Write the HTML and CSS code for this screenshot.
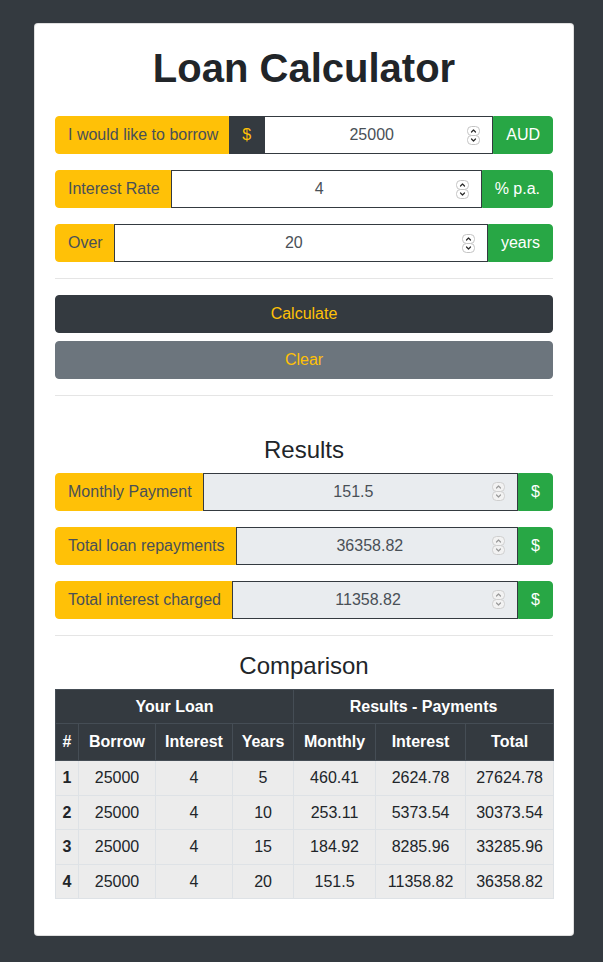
FILE: index.html
```html
<!DOCTYPE html>
<html lang="en">
<head>
<meta charset="utf-8">
<title>Loan Calculator</title>
<link rel="stylesheet" href="styles.css">
</head>
<body>
<main class="card">
  <h1 class="title">Loan Calculator</h1>
  <form class="form">
    <div class="group">
      <span class="addon addon-label">I would like to borrow</span>
      <span class="addon addon-dark">$</span>
      <label class="field">
        <input class="field-input" type="text" value="25000">
        <svg class="spin" viewBox="0 0 13 19" width="13" height="19"><rect x="0.5" y="0.5" width="12" height="9" rx="4" /><rect x="0.5" y="9.5" width="12" height="9" rx="4" /><path d="M4.5 6 L6.5 4 L8.5 6 M4.5 13 L6.5 15 L8.5 13" /></svg>
      </label>
      <span class="addon addon-green">AUD</span>
    </div>
    <div class="group">
      <span class="addon addon-label">Interest Rate</span>
      <label class="field">
        <input class="field-input" type="text" value="4">
        <svg class="spin" viewBox="0 0 13 19" width="13" height="19"><rect x="0.5" y="0.5" width="12" height="9" rx="4" /><rect x="0.5" y="9.5" width="12" height="9" rx="4" /><path d="M4.5 6 L6.5 4 L8.5 6 M4.5 13 L6.5 15 L8.5 13" /></svg>
      </label>
      <span class="addon addon-green">% p.a.</span>
    </div>
    <div class="group">
      <span class="addon addon-label">Over</span>
      <label class="field">
        <input class="field-input" type="text" value="20">
        <svg class="spin" viewBox="0 0 13 19" width="13" height="19"><rect x="0.5" y="0.5" width="12" height="9" rx="4" /><rect x="0.5" y="9.5" width="12" height="9" rx="4" /><path d="M4.5 6 L6.5 4 L8.5 6 M4.5 13 L6.5 15 L8.5 13" /></svg>
      </label>
      <span class="addon addon-green">years</span>
    </div>
    <hr class="rule">
    <button type="button" class="btn btn-dark">Calculate</button>
    <button type="button" class="btn btn-gray">Clear</button>
    <hr class="rule">
  </form>

  <h3 class="heading heading-results">Results</h3>
  <div class="group">
    <span class="addon addon-label">Monthly Payment</span>
    <label class="field field-ro">
      <input class="field-input" type="text" value="151.5" readonly>
      <svg class="spin" viewBox="0 0 13 19" width="13" height="19"><rect x="0.5" y="0.5" width="12" height="9" rx="4" /><rect x="0.5" y="9.5" width="12" height="9" rx="4" /><path d="M4.5 6 L6.5 4 L8.5 6 M4.5 13 L6.5 15 L8.5 13" /></svg>
    </label>
    <span class="addon addon-green">$</span>
  </div>
  <div class="group">
    <span class="addon addon-label">Total loan repayments</span>
    <label class="field field-ro">
      <input class="field-input" type="text" value="36358.82" readonly>
      <svg class="spin" viewBox="0 0 13 19" width="13" height="19"><rect x="0.5" y="0.5" width="12" height="9" rx="4" /><rect x="0.5" y="9.5" width="12" height="9" rx="4" /><path d="M4.5 6 L6.5 4 L8.5 6 M4.5 13 L6.5 15 L8.5 13" /></svg>
    </label>
    <span class="addon addon-green">$</span>
  </div>
  <div class="group">
    <span class="addon addon-label">Total interest charged</span>
    <label class="field field-ro">
      <input class="field-input" type="text" value="11358.82" readonly>
      <svg class="spin" viewBox="0 0 13 19" width="13" height="19"><rect x="0.5" y="0.5" width="12" height="9" rx="4" /><rect x="0.5" y="9.5" width="12" height="9" rx="4" /><path d="M4.5 6 L6.5 4 L8.5 6 M4.5 13 L6.5 15 L8.5 13" /></svg>
    </label>
    <span class="addon addon-green">$</span>
  </div>
  <hr class="rule">

  <h3 class="heading">Comparison</h3>
  <table class="table">
    <colgroup>
      <col class="c-num"><col class="c-borrow"><col class="c-int"><col class="c-years">
      <col class="c-monthly"><col class="c-rint"><col class="c-total">
    </colgroup>
    <thead>
      <tr class="head-top">
        <th colspan="4">Your Loan</th>
        <th colspan="3">Results - Payments</th>
      </tr>
      <tr class="head-cols">
        <th>#</th><th>Borrow</th><th>Interest</th><th>Years</th>
        <th>Monthly</th><th>Interest</th><th>Total</th>
      </tr>
    </thead>
    <tbody>
      <tr><th>1</th><td>25000</td><td>4</td><td>5</td><td>460.41</td><td>2624.78</td><td>27624.78</td></tr>
      <tr><th>2</th><td>25000</td><td>4</td><td>10</td><td>253.11</td><td>5373.54</td><td>30373.54</td></tr>
      <tr><th>3</th><td>25000</td><td>4</td><td>15</td><td>184.92</td><td>8285.96</td><td>33285.96</td></tr>
      <tr><th>4</th><td>25000</td><td>4</td><td>20</td><td>151.5</td><td>11358.82</td><td>36358.82</td></tr>
    </tbody>
  </table>
</main>
</body>
</html>
```

FILE: styles.css
```css
* { box-sizing: border-box; }

html, body {
  margin: 0;
  padding: 0;
  background: #343a40;
  font-family: "Liberation Sans", Arial, sans-serif;
  font-size: 16px;
  line-height: 1.5;
  color: #212529;
}

body {
  padding-top: 23px;
  padding-bottom: 27px;
}

.card {
  display: block;
  margin-left: 34px;
  width: 540px;
  background: #fff;
  border: 1px solid rgba(0,0,0,.125);
  border-radius: 4px;
  padding: 20px 20px 20px 20px;
}

.title {
  margin: 0 0 8px;
  font-size: 40px;
  font-weight: 700;
  line-height: 1.2;
  text-align: center;
  color: #212529;
}

.form {
  margin: 24px 0 0;
}

.group {
  display: flex;
  align-items: stretch;
  height: 38px;
  margin-bottom: 16px;
}

.addon {
  display: flex;
  align-items: center;
  padding: 0 12px;
  font-size: 16px;
  line-height: 24px;
  white-space: nowrap;
  border: 1px solid transparent;
}

.addon-label {
  background: #ffc107;
  border-color: #ffc107;
  color: #495057;
  border-radius: 4px 0 0 4px;
  padding: 0 10px 0 12px;
}

.addon-dark {
  background: #343a40;
  border-color: #343a40;
  color: #ffc107;
}

.addon-green {
  background: #28a745;
  border-color: #28a745;
  color: #fff;
  border-radius: 0 4px 4px 0;
}

.field {
  flex: 1 1 auto;
  min-width: 0;
  width: 1%;
  height: 38px;
  display: flex;
  align-items: center;
  padding: 0 12px;
  border: 1px solid #343a40;
  background: #fff;
}

.field-input {
  flex: 1 1 auto;
  min-width: 0;
  width: 1%;
  height: 24px;
  margin: 0;
  padding: 0;
  border: 0;
  background: transparent;
  color: #495057;
  font-family: "Liberation Sans", Arial, sans-serif;
  font-size: 16px;
  line-height: 24px;
  text-align: center;
  outline: none;
}

.spin {
  flex: 0 0 auto;
  display: block;
  margin-left: 1px;
}

.spin rect {
  fill: #fff;
  stroke: #c4c4c4;
  stroke-width: 1;
}

.spin path {
  fill: none;
  stroke: #2a2a2a;
  stroke-width: 1.2;
  stroke-linecap: round;
  stroke-linejoin: round;
}

.field-ro {
  background: #e9ecef;
}

.field-ro .spin rect {
  fill: #f2f2f2;
  stroke: #cfcfcf;
}

.field-ro .spin path {
  stroke: #9a9a9a;
}

.rule {
  margin: 16px 0;
  border: 0;
  border-top: 1px solid rgba(0,0,0,.1);
  height: 0;
}

.group + .rule { margin-top: 0; }

.btn {
  display: block;
  width: 100%;
  height: 38px;
  padding: 6px 12px;
  border: 1px solid transparent;
  border-radius: 4px;
  font-family: "Liberation Sans", Arial, sans-serif;
  font-size: 16px;
  line-height: 24px;
  color: #ffc107;
  text-align: center;
}

.btn-dark {
  background: #343a40;
  border-color: #343a40;
}

.btn-gray {
  margin-top: 8px;
  background: #6c757d;
  border-color: #6c757d;
}

.heading {
  margin: 0 0 8px;
  font-size: 24px;
  font-weight: 400;
  line-height: 1.2;
  text-align: center;
  color: #212529;
}

.heading-results {
  margin-top: 40px;
}

.table {
  width: 100%;
  border-collapse: collapse;
  margin-bottom: 16px;
  table-layout: fixed;
}

.c-num { width: 23px; }
.c-borrow { width: 77px; }
.c-int { width: 77px; }
.c-years { width: 61px; }
.c-monthly { width: 82px; }
.c-rint { width: 90px; }
.c-total { width: 88px; }

.table th,
.table td {
  padding: 5px 2px 4.5px;
  line-height: 24px;
  text-align: center;
  font-size: 16px;
  white-space: nowrap;
}

.table thead th {
  background: #343a40;
  color: #fff;
  font-weight: 700;
  border: 1px solid #454d55;
}

.head-cols th {
  padding-top: 6px;
  padding-bottom: 6px;
}

.table tbody td,
.table tbody th {
  background: #ececec;
  color: #212529;
  border: 1px solid #dee2e6;
}

.table tbody th { font-weight: 700; }
```
